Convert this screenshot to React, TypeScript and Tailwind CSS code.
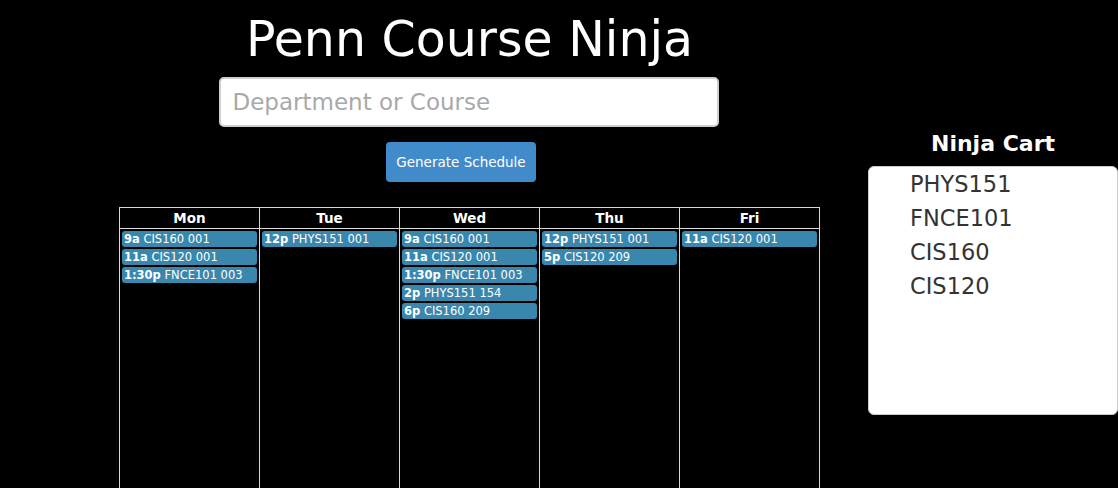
const DAYS: { name: string; events: { time: string; course: string }[] }[] = [
  {
    name: 'Mon',
    events: [
      { time: '9a', course: 'CIS160 001' },
      { time: '11a', course: 'CIS120 001' },
      { time: '1:30p', course: 'FNCE101 003' },
    ],
  },
  { name: 'Tue', events: [{ time: '12p', course: 'PHYS151 001' }] },
  {
    name: 'Wed',
    events: [
      { time: '9a', course: 'CIS160 001' },
      { time: '11a', course: 'CIS120 001' },
      { time: '1:30p', course: 'FNCE101 003' },
      { time: '2p', course: 'PHYS151 154' },
      { time: '6p', course: 'CIS160 209' },
    ],
  },
  {
    name: 'Thu',
    events: [
      { time: '12p', course: 'PHYS151 001' },
      { time: '5p', course: 'CIS120 209' },
    ],
  },
  { name: 'Fri', events: [{ time: '11a', course: 'CIS120 001' }] },
]

const CART = ['PHYS151', 'FNCE101', 'CIS160', 'CIS120']

function DayColumn({ name, events }: (typeof DAYS)[number]) {
  return (
    <div className="flex flex-col border-r border-[#d8d8d8]">
      <div className="h-[21px] border-b border-[#d8d8d8] text-center text-[13.5px] font-bold leading-[20px] text-white">
        {name}
      </div>
      <div className="flex h-[300px] flex-col gap-[2px] pt-[2px] pl-[2px] pr-[2px]">
        {events.map((ev, i) => (
          <div
            key={i}
            className="h-4 rounded-[3px] bg-[#3a87ad] pl-[2px] text-[11.5px] leading-4 text-white whitespace-nowrap"
          >
            <span className="font-bold">{ev.time}</span> {ev.course}
          </div>
        ))}
      </div>
    </div>
  )
}

export default function App() {
  return (
    <div className="h-[488px] w-full overflow-hidden bg-black font-['DejaVu_Sans',sans-serif]">
      <div className="flex">
        {/* Search + schedule */}
        <div className="ml-[119px] flex w-[701px] flex-col items-center">
          <h1 className="mt-[10px] text-[49px] leading-[60px] text-white">Penn Course Ninja</h1>
          <input
            type="text"
            placeholder="Department or Course"
            className="mt-[7px] mr-[2px] h-[50px] w-[500px] rounded-[5px] border-2 border-[#cfcfcf] bg-white px-3 text-[23px] text-[#555] outline-none placeholder:text-[#a9a9a9]"
          />
          <button
            type="button"
            className="mt-[15px] mr-[17px] h-10 w-[150px] rounded-[4px] bg-[#428bca] text-[13.5px] text-white"
          >
            Generate Schedule
          </button>
          <div className="mt-[25px] grid w-[701px] grid-cols-5 border-t border-l border-[#d8d8d8]">
            {DAYS.map(d => (
              <DayColumn key={d.name} {...d} />
            ))}
          </div>
        </div>

        {/* Ninja cart */}
        <div className="ml-[48px] flex w-[250px] flex-col">
          <h2 className="mt-[130px] text-center text-[22px] font-bold leading-[28px] text-white">Ninja Cart</h2>
          <ul className="mt-[8px] h-[249px] rounded-[6px] border border-[#ccc] bg-white pl-[41px]">
            {CART.map(c => (
              <li key={c} className="text-[22.5px] leading-[34px] text-[#333]">
                {c}
              </li>
            ))}
          </ul>
        </div>
      </div>
    </div>
  )
}
